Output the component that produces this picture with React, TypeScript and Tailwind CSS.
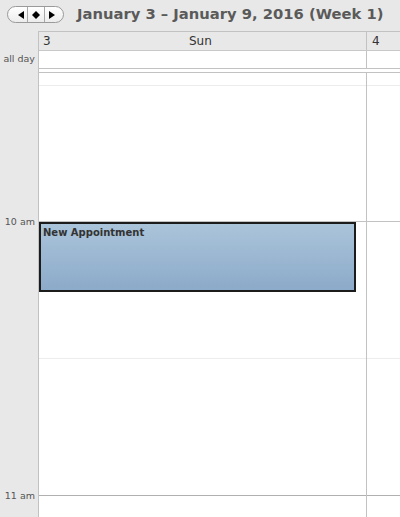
import { memo } from 'react'

const NavButton = memo(() => (
  <div className="ml-[7px] flex h-[17px] w-[57px] items-stretch overflow-hidden rounded-full border border-[#9a9a9a] bg-gradient-to-b from-white to-[#ececec]">
    <button className="flex w-[19px] items-center justify-end pr-[3px]" aria-label="Previous week">
      <svg width="6" height="8" viewBox="0 0 6 8">
        <path d="M6 0 L0 4 L6 8 Z" fill="#000" />
      </svg>
    </button>
    <button className="flex w-[18px] items-center justify-center border-x border-[#a8a8a8]" aria-label="Today">
      <svg width="8" height="8" viewBox="0 0 8 8">
        <path d="M4 0 L8 4 L4 8 L0 4 Z" fill="#000" />
      </svg>
    </button>
    <button className="flex flex-1 items-center justify-start pl-[4px]" aria-label="Next week">
      <svg width="6" height="8" viewBox="0 0 6 8">
        <path d="M0 0 L6 4 L0 8 Z" fill="#000" />
      </svg>
    </button>
  </div>
))

const GutterLabel = ({ text }: { text: string }) => (
  <span className="block translate-y-1/2 pr-[3px] text-right text-[9.5px] leading-[12px] text-[#555]">{text}</span>
)

export default function App() {
  return (
    <div className="h-[517px] w-[400px] overflow-hidden bg-[#e8e8e8] font-['DejaVu_Sans',sans-serif]">
      <div className="flex h-[31px] items-center pb-[2px]">
        <NavButton />
        <h1 className="ml-[13px] whitespace-nowrap text-[14.75px] font-bold text-[#5a5a5a]">
          January 3 – January 9, 2016 (Week 1)
        </h1>
      </div>

      <div className="flex">
        {/* time gutter */}
        <div className="flex w-[38px] shrink-0 flex-col">
          <div className="h-[20px]" />
          <div className="flex h-[17px] items-center justify-end pr-[3px] text-[9.5px] text-[#555]">all day</div>
          <div className="h-[5px]" />
          <div className="h-[13px]" />
          <div className="flex h-[136px] flex-col justify-end">
            <GutterLabel text="10 am" />
          </div>
          <div className="h-[137px]" />
          <div className="flex h-[137px] flex-col justify-end">
            <GutterLabel text="11 am" />
          </div>
        </div>

        {/* days */}
        <div className="flex flex-1 flex-col border-l border-t border-[#c2c2c2]">
          <div className="flex h-[19px] border-b border-[#c8c8c8] text-[12px] text-[#333]">
            <div className="flex w-[328px] items-center border-r border-[#c2c2c2] pl-[4px]">
              <span>3</span>
              <span className="flex-1 pr-[16px] text-center">Sun</span>
            </div>
            <div className="flex flex-1 items-center pl-[5px]">4</div>
          </div>
          <div className="flex h-[17px] bg-white">
            <div className="w-[328px] border-r border-[#c2c2c2]" />
            <div className="flex-1" />
          </div>
          <div className="h-[5px] border-y border-[#c2c2c2] bg-white" />

          <div className="flex bg-white">
            <div className="relative w-[328px] border-r border-[#c2c2c2]">
              <div className="h-[13px] border-b border-[#ececec]" />
              <div className="h-[136px] border-b border-[#c2c2c2]" />
              <div className="h-[137px] border-b border-[#ececec]" />
              <div className="h-[137px] border-b border-[#b0b0b0]" />
              <div className="h-[40px]" />

              <div className="absolute left-0 top-[149px] h-[70px] w-[317px] border-2 border-[#1c1c1c] bg-gradient-to-b from-[#aac4da] to-[#8caac9] px-[2px] pt-[3px]">
                <p className="text-[10px] font-bold leading-[12px] text-[#333]">New Appointment</p>
              </div>
            </div>
            <div className="flex-1">
              <div className="h-[13px] border-b border-[#ececec]" />
              <div className="h-[136px] border-b border-[#c2c2c2]" />
              <div className="h-[137px] border-b border-[#ececec]" />
              <div className="h-[137px] border-b border-[#b0b0b0]" />
              <div className="h-[40px]" />
            </div>
          </div>
        </div>
      </div>
    </div>
  )
}
